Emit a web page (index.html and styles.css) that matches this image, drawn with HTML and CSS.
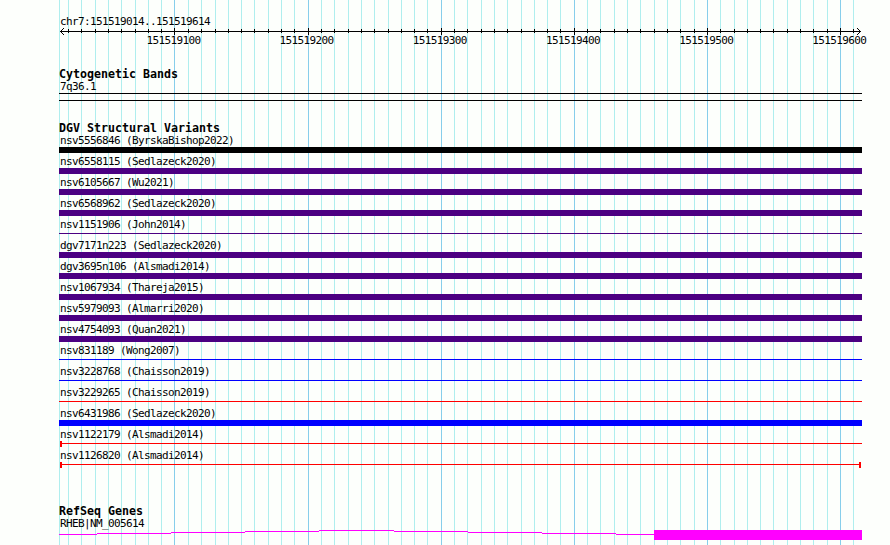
FILE: index.html
```html
<!DOCTYPE html>
<html lang="en">
<head>
    <meta charset="UTF-8">
    <title>chr7:151519014..151519614</title>
    <link rel="stylesheet" href="styles.css">
</head>
<body>
    <svg class="grid" width="890" height="545">
        <path class="minor" id="minor" />
        <path class="major" id="major" />
    </svg>

    <div class="panel">
        <div class="ruler">
            <div class="label">chr7:151519014..151519614</div>
            <svg class="axis" width="803" height="9">
                <path d="M1 4.5H802" />
                <path d="M2 3.5h1M3 2.5h1M4 1.5h1M2 5.5h1M3 6.5h1M4 7.5h1" />
                <path d="M800 3.5h1M799 2.5h1M798 1.5h1M800 5.5h1M799 6.5h1M798 7.5h1" />
                <path id="ticks" />
            </svg>
            <div class="numbers">
                <span>151519100</span>
                <span>151519200</span>
                <span>151519300</span>
                <span>151519400</span>
                <span>151519500</span>
                <span>151519600</span>
            </div>
        </div>

        <div class="track cyto">
            <h2>Cytogenetic Bands</h2>
            <div class="label">7q36.1</div>
            <div class="band"></div>
        </div>

        <div class="track variants">
            <h2>DGV Structural Variants</h2>
            <div class="feature"><div class="label">nsv5556846 (ByrskaBishop2022)</div><div class="bar black"></div></div>
            <div class="feature"><div class="label">nsv6558115 (Sedlazeck2020)</div><div class="bar purple"></div></div>
            <div class="feature"><div class="label">nsv6105667 (Wu2021)</div><div class="bar purple"></div></div>
            <div class="feature"><div class="label">nsv6568962 (Sedlazeck2020)</div><div class="bar purple"></div></div>
            <div class="feature"><div class="label">nsv1151906 (John2014)</div><div class="bar thin purple"></div></div>
            <div class="feature"><div class="label">dgv7171n223 (Sedlazeck2020)</div><div class="bar purple"></div></div>
            <div class="feature"><div class="label">dgv3695n106 (Alsmadi2014)</div><div class="bar purple"></div></div>
            <div class="feature"><div class="label">nsv1067934 (Thareja2015)</div><div class="bar purple"></div></div>
            <div class="feature"><div class="label">nsv5979093 (Almarri2020)</div><div class="bar purple"></div></div>
            <div class="feature"><div class="label">nsv4754093 (Quan2021)</div><div class="bar purple"></div></div>
            <div class="feature"><div class="label">nsv831189 (Wong2007)</div><div class="bar thin blue"></div></div>
            <div class="feature"><div class="label">nsv3228768 (Chaisson2019)</div><div class="bar thin blue"></div></div>
            <div class="feature"><div class="label">nsv3229265 (Chaisson2019)</div><div class="bar thin red"></div></div>
            <div class="feature"><div class="label">nsv6431986 (Sedlazeck2020)</div><div class="bar blue"></div></div>
            <div class="feature"><div class="label">nsv1122179 (Alsmadi2014)</div><div class="range open"></div></div>
            <div class="feature"><div class="label">nsv1126820 (Alsmadi2014)</div><div class="range"></div></div>
        </div>

        <div class="track genes">
            <h2>RefSeq Genes</h2>
            <div class="label">RHEB|NM_005614</div>
            <svg class="gene" width="803" height="12">
                <path d="M0 5.5H38M38 4.5H112M112 3.5H186M186 2.5H260M260 1.5H335M335 2.5H409M409 3.5H483M483 4.5H557M557 5.5H595" />
                <rect x="595" y="1" width="208" height="10" />
            </svg>
        </div>
    </div>

    <script>
        // one grid line per 10 bases
        const major = [174, 308, 441, 574, 707, 840];
        const minor = [
            68, 81, 95, 108, 121, 135, 148, 161,
            188, 201, 215, 228, 241, 254, 268, 281, 294,
            321, 334, 348, 361, 374, 388, 401, 414, 427,
            454, 467, 481, 494, 507, 521, 534, 547, 560,
            587, 600, 614, 627, 640, 654, 667, 680, 694,
            720, 734, 747, 760, 773, 787, 800, 813, 827, 853
        ];
        const left = 59;

        function lines(list, offset, top, height) {
            return list.map((x) => `M${x - offset + 0.5} ${top}v${height}`).join('');
        }

        document.getElementById('minor').setAttribute('d', lines([left, ...minor], 0, 0, 545));
        document.getElementById('major').setAttribute('d', lines(major, 0, 0, 545));
        document.getElementById('ticks').setAttribute('d', lines(minor, left, 2, 4) + lines(major, left, 1, 7));
    </script>
</body>
</html>
```
FILE: styles.css
```css
body {
    margin: 0;
    height: 545px;
    overflow: hidden;
    background-color: #fdfffc;
    color: #000;
    font-family: "DejaVu Sans Mono", monospace;
}

svg {
    display: block;
    fill: none;
    shape-rendering: crispEdges;
}

.grid {
    position: absolute;
    top: 0;
    left: 0;
}

.minor {
    stroke: #afeeee;
}

.major {
    stroke: #87ceeb;
}

.panel {
    position: relative;
    width: 803px;
    margin-left: 59px;
    padding-top: 15px;
}

.label,
.numbers {
    height: 12px;
    font-size: 11px;
    line-height: 14px;
    letter-spacing: -0.622px;
    white-space: pre;
}

.label {
    padding-left: 1px;
}

h2 {
    height: 12px;
    margin: 0;
    font-size: 11.63px;
    line-height: 12px;
    white-space: pre;
}

.ruler {
    height: 53px;
}

.axis {
    stroke: #000;
}

.numbers {
    display: flex;
    gap: 79.2px;
    margin-top: -1px;
    padding-left: 87.4px;
    line-height: 12px;
}

.numbers span {
    width: 54px;
    flex: none;
}

.cyto {
    height: 54px;
}

.band {
    height: 6px;
    margin-top: 1px;
    border: solid #000;
    border-width: 1px 0;
}

.variants {
    height: 383px;
}

.feature {
    display: flow-root;
    height: 21px;
}

.bar {
    height: 6px;
    margin-top: 1px;
}

.thin {
    height: 1px;
    margin-top: 3px;
}

.black {
    background-color: #000;
}

.purple {
    background-color: #4b0082;
}

.blue {
    background-color: #00f;
}

.red {
    background-color: #f00;
}

.range {
    height: 6px;
    margin: 1px 1px 0;
    box-sizing: border-box;
    border: solid #f00;
    border-width: 0 2px;
    background: linear-gradient(#f00, #f00) 0 2px / 100% 1px no-repeat;
}

.open {
    margin-right: 0;
    border-right: 0;
}

.gene {
    stroke: #f0f;
}

.gene rect {
    fill: #f0f;
    stroke: none;
}
```
